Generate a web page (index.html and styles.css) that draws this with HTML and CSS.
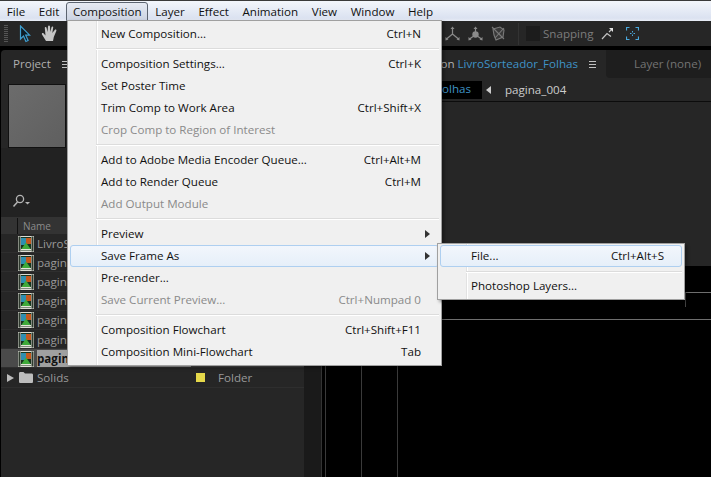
FILE: index.html
```html
<!DOCTYPE html>
<html lang="en">
<head>
<meta charset="utf-8">
<title>Composition menu</title>
<link rel="stylesheet" href="styles.css">
</head>
<body>
<svg class="defs" width="0" height="0" aria-hidden="true">
  <symbol id="comp" viewBox="0 0 16 16">
    <rect width="16" height="16" fill="#dcdcd4"/>
    <rect x="0.5" y="0.5" width="2" height="15" fill="#2e3a2e"/>
    <rect x="13.5" y="0.5" width="2" height="15" fill="#2e3a2e"/>
    <rect x="3" y="1" width="10" height="14" fill="#17331f"/>
    <rect x="3" y="2" width="6" height="7" fill="#2f8fb0"/>
    <rect x="8" y="2" width="5" height="6" fill="#c4581e"/>
    <path d="M3 13.5 8 6.5l5 7z" fill="#3faa3a"/>
    <rect x="3" y="13" width="10" height="1.5" fill="#e4e4d8"/>
  </symbol>
</svg>

<div class="app">
  <nav class="menubar">
    <span class="top">File</span>
    <span class="top">Edit</span>
    <span class="top open">Composition</span>
    <span class="top">Layer</span>
    <span class="top">Effect</span>
    <span class="top">Animation</span>
    <span class="top">View</span>
    <span class="top">Window</span>
    <span class="top">Help</span>
  </nav>

  <div class="toolbar">
    <span class="grip"></span>
    <svg class="ic-arrow" width="12" height="18" viewBox="0 0 12 18"><path d="M1.5 1v13l3-3 2.400 5.500 2.200-1-2.400-5.300h4z" fill="#0d1c26" stroke="#3f9fd0" stroke-width="1.2"/></svg>
    <svg class="ic-hand" width="18" height="17" viewBox="0 0 18 17"><path d="M5 16 1 9.500c-.7-1.200.8-2 1.700-1L4.500 10.500 3.800 3c-.1-1.300 1.600-1.400 1.800-.1L6.500 7 7 1.500c.1-1.300 1.900-1.300 2 0L9.300 7l1.200-4.800c.3-1.200 1.900-.9 1.700.3L11.300 8l2.400-3c.8-1 2.200-.2 1.600.9L12.800 12 12 16z" fill="#c6c6c6"/></svg>
    <span class="tool-right">
      <svg class="axis" width="15" height="15" viewBox="0 0 15 15"><path d="M7.500 2v6M7.500 8 1.500 13M7.500 8l6 5" stroke="#8a8a8a" stroke-width="1.200" fill="none"/><path d="M5.500 3 7.500 .5 9.500 3zM.5 11l3 2.500-3 1zM14.500 11l-3 2.500 3 1z" fill="#8a8a8a"/></svg>
      <svg class="axis" width="15" height="15" viewBox="0 0 15 15"><circle cx="7.500" cy="8.500" r="3.200" fill="#8a8a8a"/><path d="M7.500 2v4M5 10.500 1.500 13M10 10.500l3.500 2.500" stroke="#8a8a8a" stroke-width="1.200" fill="none"/><path d="M5.500 3 7.500 .5 9.500 3zM.5 11l3 2.500-3 1zM14.500 11l-3 2.500 3 1z" fill="#8a8a8a"/></svg>
      <svg class="axis" width="15" height="15" viewBox="0 0 15 15"><path d="M2 3 9 1l4 3-1 7-7 3-2-5z" fill="#3a3a3a" stroke="#7a7a7a" stroke-width="1.100"/><path d="M1 1l12 12M13 2 4 12" stroke="#7a7a7a" stroke-width="1.100"/></svg>
      <span class="tool-sep"></span>
      <span class="swatch"></span>
      <span class="snap">Snapping</span>
      <svg class="ic-snap" width="13" height="13" viewBox="0 0 13 13"><path d="M1 12 6 6.500l4 3M8 5l3.500-3.500" stroke="#c4c4c4" stroke-width="1.200" fill="none"/><path d="M8 1h4v4z" fill="#e4e4e4"/></svg>
      <svg class="ic-frame" width="13" height="13" viewBox="0 0 13 13"><path d="M.5 3.500v-3h3M9.500.5h3v3M12.500 9.500v3h-3M3.500 12.500h-3v-3" stroke="#4aa8dc" fill="none" stroke-width="1.200"/><path d="M6.500 4v1.500M6.500 7.500V9M4 6.500h1.500M7.500 6.500H9" stroke="#4aa8dc" fill="none"/></svg>
    </span>
  </div>

  <div class="workspace">
    <section class="project">
      <header class="tabhead">
        <span class="tabname">Project</span>
        <span class="burger"></span>
      </header>
      <div class="thumb"></div>
      <div class="search">
        <svg width="18" height="14" viewBox="0 0 18 14"><circle cx="8" cy="5" r="3.600" fill="none" stroke="#b5b5b5" stroke-width="1.300"/><path d="M5.500 8 1.500 12.500" stroke="#b5b5b5" stroke-width="1.500"/><path d="M13 8h5l-2.500 2.500z" fill="#b5b5b5"/></svg>
      </div>
      <div class="colhead"><span class="colname">Name</span></div>
      <ul class="files">
        <li class="file"><svg class="ficon" width="16" height="16"><use href="#comp"/></svg><span>LivroS</span></li>
        <li class="file"><svg class="ficon" width="16" height="16"><use href="#comp"/></svg><span>pagin</span></li>
        <li class="file"><svg class="ficon" width="16" height="16"><use href="#comp"/></svg><span>pagin</span></li>
        <li class="file"><svg class="ficon" width="16" height="16"><use href="#comp"/></svg><span>pagin</span></li>
        <li class="file"><svg class="ficon" width="16" height="16"><use href="#comp"/></svg><span>pagin</span></li>
        <li class="file"><svg class="ficon" width="16" height="16"><use href="#comp"/></svg><span>pagin</span></li>
        <li class="file selected"><svg class="ficon" width="16" height="16"><use href="#comp"/></svg><span class="selname">pagin</span></li>
        <li class="file folder">
          <span class="twist"></span>
          <svg class="folder-ic" width="14" height="11" viewBox="0 0 14 11"><path d="M0 1.500C0 .5.500 0 1.500 0h3l1.500 1.500h6.500c1 0 1.500.5 1.500 1.500v6.500c0 1-.5 1.500-1.500 1.500h-11C.5 11 0 10.500 0 9.500z" fill="#bdbdbd"/></svg>
          <span class="foldername">Solids</span>
          <span class="label-yellow"></span>
          <span class="kind">Folder</span>
        </li>
      </ul>
    </section>

    <div class="gutter"></div>

    <div class="right">
      <div class="viewer">
        <div class="tabs">
          <div class="tab-active">
            <span class="tabname comp-tab">on <b class="blue">LivroSorteador_Folhas</b></span>
            <span class="burger"></span>
          </div>
          <div class="tab-layer">Layer (none)</div>
        </div>
        <div class="crumbs">
          <span class="crumb-on">olhas</span>
          <span class="crumb-arrow"></span>
          <span class="crumb">pagina_004</span>
        </div>
      </div>
      <div class="timeline">
        <div class="rule-short"></div>
        <div class="rule-long"></div>
        <div class="tracks"><span class="track first"></span><span class="track"></span><span class="track"></span></div>
      </div>
    </div>
  </div>
</div>

<div class="menu main-menu">
  <div class="item"><span>New Composition...</span><kbd>Ctrl+N</kbd></div>
  <div class="sep"></div>
  <div class="item"><span>Composition Settings...</span><kbd>Ctrl+K</kbd></div>
  <div class="item"><span>Set Poster Time</span></div>
  <div class="item"><span>Trim Comp to Work Area</span><kbd>Ctrl+Shift+X</kbd></div>
  <div class="item off"><span>Crop Comp to Region of Interest</span></div>
  <div class="sep"></div>
  <div class="item"><span>Add to Adobe Media Encoder Queue...</span><kbd>Ctrl+Alt+M</kbd></div>
  <div class="item"><span>Add to Render Queue</span><kbd>Ctrl+M</kbd></div>
  <div class="item off"><span>Add Output Module</span></div>
  <div class="sep"></div>
  <div class="item sub"><span>Preview</span></div>
  <div class="item sub hot"><span>Save Frame As</span></div>
  <div class="item"><span>Pre-render...</span></div>
  <div class="item off"><span>Save Current Preview...</span><kbd>Ctrl+Numpad 0</kbd></div>
  <div class="sep"></div>
  <div class="item"><span>Composition Flowchart</span><kbd>Ctrl+Shift+F11</kbd></div>
  <div class="item"><span>Composition Mini-Flowchart</span><kbd>Tab</kbd></div>
</div>

<div class="menu sub-menu">
  <div class="item hot"><span>File...</span><kbd>Ctrl+Alt+S</kbd></div>
  <div class="sep"></div>
  <div class="item"><span>Photoshop Layers...</span></div>
</div>
</body>
</html>
```
FILE: styles.css
```css
* { box-sizing: border-box; }
html, body { margin: 0; height: 100%; overflow: hidden; background: #000; }
body { font: 11.6px/16px "Open Sans", "Noto Sans", sans-serif; position: relative; width: 711px; height: 477px; }
.defs { position: absolute; }
.app { display: flex; flex-direction: column; height: 477px; }

/* menu bar */
.menubar { height: 21px; flex: none; display: flex; align-items: center; border-top: 1px solid #3a3a3a; background: linear-gradient(#f3f6fb, #dbe2f1 85%, #e8ecf5); color: #111; }
.top { padding: 0 5.8px; height: 19px; line-height: 17px; border: 1px solid transparent; }
.top.open { border-color: #5c6470; border-radius: 3px 3px 0 0; background: linear-gradient(#e6eaf2, #ccd3e2); }

/* toolbar */
.toolbar { height: 25px; flex: none; display: flex; align-items: center; background: #262626; padding-left: 4px; }
.grip { width: 4px; height: 18px; margin-right: 11px; background: repeating-linear-gradient(#555 0 1px, #262626 1px 2px); }
.ic-arrow { margin-right: 10px; }
.tool-right { margin-left: 386px; display: flex; align-items: center; }
.axis { margin-right: 8px; }
.tool-sep { width: 1px; height: 22px; background: #333; margin: 0 7px 0 4px; }
.swatch { width: 14px; height: 15px; background: #1c1c1c; }
.snap { margin-left: 3px; width: 58px; color: #7c7c7c; }
.ic-snap { margin-right: 12px; }

/* workspace */
.workspace { flex: 1; display: flex; padding-top: 4px; min-height: 0; }
.project { width: 303px; margin-left: 1px; flex: none; background: #262626; display: flex; flex-direction: column; border-radius: 4px 4px 0 0; }
.tabhead { height: 28px; flex: none; display: flex; align-items: center; padding-left: 12px; }
.tabname { color: #b0b0b0; }
.burger { width: 7px; height: 7px; margin-left: 11px; flex: none; border-top: 1px solid #c0c0c0; border-bottom: 1px solid #c0c0c0; background: linear-gradient(transparent 2px, #c0c0c0 2px 3px, transparent 3px); }
.thumb { width: 58px; height: 64px; flex: none; margin: 6px 0 0 7px; background: linear-gradient(135deg, #6c6c6c, #5f5f5f); border: 1px solid #111; }
.search { height: 69px; flex: none; padding: 46px 0 0 11px; background: #222; }
.colhead { height: 17px; flex: none; background: #333; display: flex; align-items: center; padding-left: 16px; font-size: 10px; color: #8c8c8c; }
.colname { border-left: 1px solid #111; padding-left: 5px; }
.files { list-style: none; margin: 0; padding: 0; }
.file { height: 19.2px; display: flex; align-items: center; padding: 1px 0 0 17px; color: #999; border-bottom: 1px solid #2e2e2e; white-space: nowrap; }
.ficon { flex: none; margin-right: 3px; }
.file.selected { background: #4a4a4a; padding-right: 113px; }
.selname { flex: 1; align-self: stretch; background: #a0a0a0; color: #111; font-weight: 700; line-height: 18px; }
.folder { padding-left: 6px; }
.twist { width: 0; height: 0; border-left: 7px solid #bbb; border-top: 4px solid transparent; border-bottom: 4px solid transparent; margin-right: 5px; }
.folder-ic { margin-right: 4px; }
.foldername { width: 159px; }
.label-yellow { width: 9px; height: 9px; background: #e5d84a; margin-right: 13px; }

.gutter { width: 17px; flex: none; background: #1a1a1a; }

/* right side */
.right { flex: 1; display: flex; flex-direction: column; min-width: 0; }
.viewer { height: 216px; flex: none; background: #262626; }
.tabs { height: 28px; display: flex; }
.tab-active { width: 285px; display: flex; align-items: center; justify-content: flex-end; padding-right: 10px; }
.comp-tab { white-space: nowrap; }
.blue { font-weight: 400; color: #3f93c6; }
.tab-layer { flex: 1; background: #1e1e1e; color: #737373; padding: 6px 0 0 28px; border-radius: 0 0 0 4px; }
.crumbs { height: 24px; display: flex; align-items: center; border-bottom: 1px solid #0c0c0c; }
.crumb-on { margin-left: 121px; background: #000; color: #3f93c6; width: 40px; height: 18px; padding-right: 12px; text-align: right; white-space: nowrap; }
.crumb-arrow { width: 0; height: 0; border-right: 5px solid #ccc; border-top: 4px solid transparent; border-bottom: 4px solid transparent; margin: 0 14px 0 4px; }
.crumb { color: #ccc; }

.timeline { flex: 1; background: #000; min-height: 0; display: flex; flex-direction: column; }
.rule-short { height: 1px; margin: 26px 0 0 364px; background: #6e6e6e; flex: none; position: relative; }
.rule-short::after { content: ""; position: absolute; left: 0; top: 0; width: 1px; height: 15px; background: #444; }
.rule-long { height: 1px; margin-top: 26px; background: #6e6e6e; flex: none; }
.tracks { flex: 1; display: flex; border-left: 1px solid #333; }
.track { width: 36px; border-left: 1px solid #3a3a3a; }
.track.first { margin-left: 3px; }

/* popup menus */
.menu { position: absolute; background: #f0f0f0; border: 1px solid #a0a0a0; box-shadow: 2px 2px 3px rgba(0,0,0,.35); color: #111; }
.menu::before { content: ""; position: absolute; top: 0; bottom: 0; left: 28px; width: 1px; background: #e2e2e2; box-shadow: 1px 0 0 #fff; }
.main-menu { left: 67px; top: 20px; width: 375px; height: 346px; padding: 2px; }
.sub-menu { left: 437px; top: 243px; width: 248px; height: 57px; padding: 1px 2px; }
.item { height: 22px; display: flex; justify-content: space-between; align-items: center; padding: 0 17px 0 30px; border: 1px solid transparent; border-radius: 3px; position: relative; white-space: nowrap; }
kbd { font: inherit; }
.off { color: #8a8a8a; }
.sub::after { content: ""; position: absolute; right: 8px; top: 6px; border-left: 5px solid #333; border-top: 4px solid transparent; border-bottom: 4px solid transparent; }
.hot { border-color: #aecff0; background: linear-gradient(#f2f6fc, #e6eff9); }
.sep { height: 8px; margin-left: 26px; position: relative; background: linear-gradient(transparent 3px, #dcdcdc 3px 4px, #fff 4px 5px, transparent 5px); }
.sub-menu .sep { background-position: 0 1px; background-repeat: no-repeat; }
```
